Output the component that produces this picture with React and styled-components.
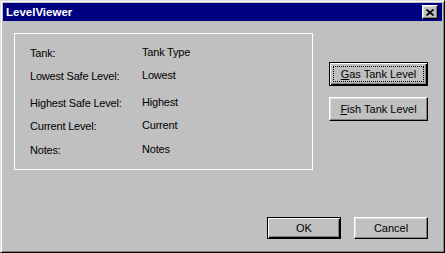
import styled, { createGlobalStyle } from 'styled-components'

const GlobalStyle = createGlobalStyle`
  html, body {
    margin: 0;
    padding: 0;
    background: #c0c0c0;
  }

  * {
    box-sizing: border-box;
  }
`

const font = `"Liberation Sans", Arial, sans-serif`

const Window = styled.div`
  display: flex;
  flex-direction: column;
  width: 445px;
  height: 253px;
  padding: 2px;
  background: #c0c0c0;
  border: 1px solid;
  border-color: #dfdfdf #000 #000 #dfdfdf;
  box-shadow: inset 1px 1px #fff, inset -1px -1px #808080;
  font-family: ${font};
`

const TitleBar = styled.div`
  display: flex;
  align-items: center;
  justify-content: space-between;
  height: 18px;
  padding: 0 4px 0 3px;
  background: #000080;
`

const Title = styled.span`
  color: #fff;
  font-weight: 700;
  font-size: 11.5px;
`

const CloseButton = styled.button`
  display: flex;
  align-items: center;
  justify-content: center;
  width: 16px;
  height: 14px;
  padding: 0;
  background: #c0c0c0;
  border: 1px solid;
  border-color: #fff #000 #000 #fff;
  box-shadow: inset -1px -1px #808080, inset 1px 1px #dfdfdf;
`

const Body = styled.div`
  flex: 1;
  display: flex;
  flex-direction: column;
  padding: 12px 14px 11px 11px;
`

const TopRow = styled.div`
  display: flex;
`

const GroupBox = styled.div`
  width: 300px;
  height: 137px;
  padding: 12px 0 0 15px;
  border: 1px solid #fff;
`

const Field = styled.div`
  display: flex;
  align-items: flex-start;
  height: 13px;
  margin-top: ${p => p.$mt || 0}px;
  font-size: 11px;
  letter-spacing: -0.2px;
  line-height: 13px;
  color: #000;
`

const Label = styled.span`
  width: 112px;
  margin-top: 1px;
`

const Value = styled.span``

const SideButtons = styled.div`
  display: flex;
  flex-direction: column;
  gap: 11px;
  margin: 29px 0 0 16px;
`

const Footer = styled.div`
  display: flex;
  justify-content: flex-end;
  gap: 13px;
  margin-top: auto;
`

const Button = styled.button`
  position: relative;
  width: ${p => p.$w}px;
  height: ${p => p.$h}px;
  padding: 0;
  background: #c0c0c0;
  color: #000;
  font-family: ${font};
  font-size: 11px;
  border: 1px solid;
  border-color: ${p => (p.$default ? '#000' : '#fff #000 #000 #fff')};
  box-shadow: ${p =>
    p.$default
      ? 'inset 1px 1px #fff, inset -1px -1px #000, inset -2px -2px #808080'
      : 'inset -1px -1px #808080, inset 1px 1px #dfdfdf'};

  &::after {
    content: '';
    display: ${p => (p.$focused ? 'block' : 'none')};
    position: absolute;
    inset: 3px;
    border: 1px dotted #000;
  }
`

const fields = [
  { label: 'Tank:', value: 'Tank Type', mt: 0 },
  { label: 'Lowest Safe Level:', value: 'Lowest', mt: 10 },
  { label: 'Highest Safe Level:', value: 'Highest', mt: 14 },
  { label: 'Current Level:', value: 'Current', mt: 10 },
  { label: 'Notes:', value: 'Notes', mt: 11 },
]

function CloseIcon() {
  return (
    <svg width="8" height="7" viewBox="0 0 8 7">
      <path d="M0.5 0.5 L7.5 6.5 M7.5 0.5 L0.5 6.5" stroke="#000" strokeWidth="1.7" />
    </svg>
  )
}

export default function App() {
  return (
    <Window>
      <GlobalStyle />
      <TitleBar>
        <Title>LevelViewer</Title>
        <CloseButton aria-label="Close">
          <CloseIcon />
        </CloseButton>
      </TitleBar>
      <Body>
        <TopRow>
          <GroupBox>
            {fields.map(f => (
              <Field key={f.label} $mt={f.mt}>
                <Label>{f.label}</Label>
                <Value>{f.value}</Value>
              </Field>
            ))}
          </GroupBox>
          <SideButtons>
            <Button $w={99} $h={24} $default $focused>
              <u>G</u>as Tank Level
            </Button>
            <Button $w={99} $h={24}>
              <u>F</u>ish Tank Level
            </Button>
          </SideButtons>
        </TopRow>
        <Footer>
          <Button $w={74} $h={22} $default>OK</Button>
          <Button $w={74} $h={22}>Cancel</Button>
        </Footer>
      </Body>
    </Window>
  )
}
